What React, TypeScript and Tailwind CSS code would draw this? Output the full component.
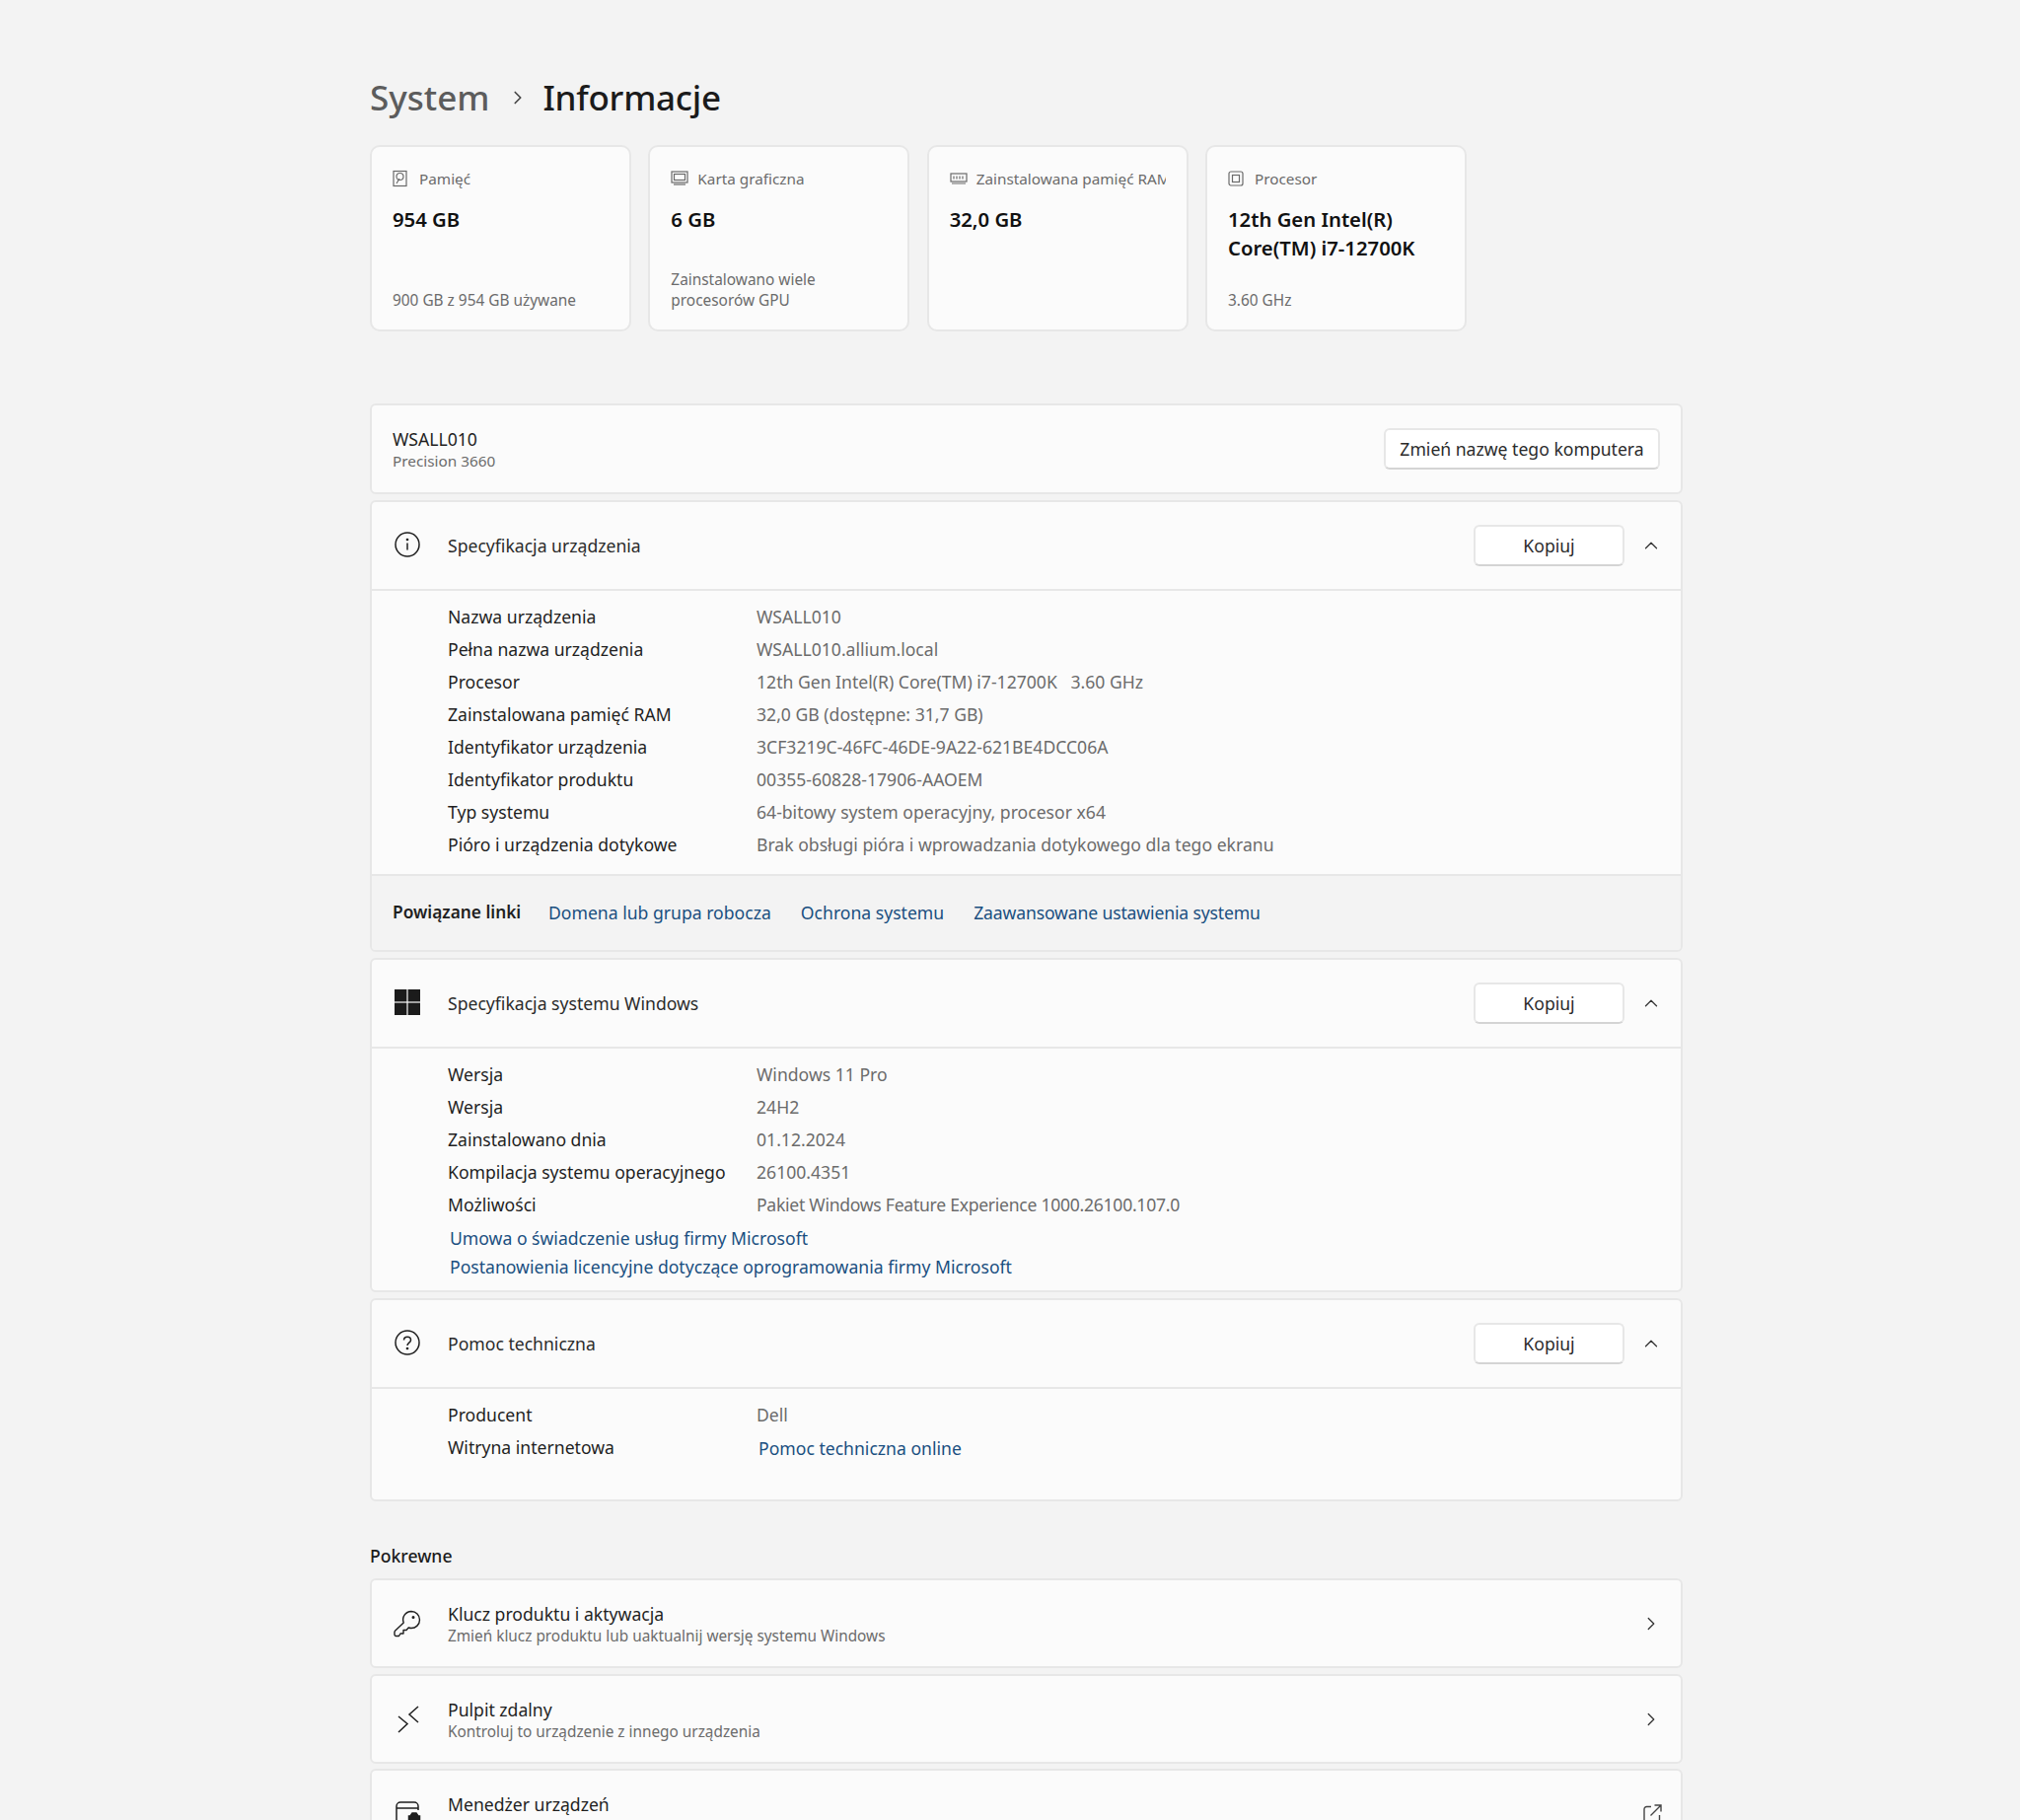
import React from 'react';
import { ChevronRight, ChevronUp } from 'lucide-react';

const font = "font-['Noto_Sans','Open_Sans',sans-serif]";

const deviceRows = [
  ['Nazwa urządzenia', 'WSALL010'],
  ['Pełna nazwa urządzenia', 'WSALL010.allium.local'],
  ['Procesor', '12th Gen Intel(R) Core(TM) i7-12700K   3.60 GHz'],
  ['Zainstalowana pamięć RAM', '32,0 GB (dostępne: 31,7 GB)'],
  ['Identyfikator urządzenia', '3CF3219C-46FC-46DE-9A22-621BE4DCC06A'],
  ['Identyfikator produktu', '00355-60828-17906-AAOEM'],
  ['Typ systemu', '64-bitowy system operacyjny, procesor x64'],
  ['Pióro i urządzenia dotykowe', 'Brak obsługi pióra i wprowadzania dotykowego dla tego ekranu'],
];

const windowsRows = [
  ['Wersja', 'Windows 11 Pro'],
  ['Wersja', '24H2'],
  ['Zainstalowano dnia', '01.12.2024'],
  ['Kompilacja systemu operacyjnego', '26100.4351'],
  ['Możliwości', 'Pakiet Windows Feature Experience 1000.26100.107.0', 'tracking-[-0.28px]'],
];

function DiskIcon() {
  return (
    <svg width="16" height="18" viewBox="0 0 16 18" fill="none" stroke="#6a6a6a" strokeWidth="1.2">
      <rect x="1" y="1.5" width="13" height="15" />
      <circle cx="7.5" cy="7" r="3.5" />
      <path d="M7 9l-3 5" />
    </svg>
  );
}

function GpuIcon() {
  return (
    <svg width="18" height="16" viewBox="0 0 18 16" fill="none" stroke="#6a6a6a" strokeWidth="1.2">
      <rect x="1" y="1" width="16" height="11" />
      <rect x="3.5" y="3.5" width="11" height="6" />
      <path d="M3 14h12" />
    </svg>
  );
}

function RamIcon() {
  return (
    <svg width="18" height="12" viewBox="0 0 18 12" fill="none" stroke="#6a6a6a" strokeWidth="1.2">
      <rect x="1" y="1" width="16" height="8" />
      <path d="M4 3.5v3M7 3.5v3M10 3.5v3M13 3.5v3M2 11h14" />
    </svg>
  );
}

function CpuIcon() {
  return (
    <svg width="16" height="16" viewBox="0 0 16 16" fill="none" stroke="#6a6a6a" strokeWidth="1.2">
      <rect x="1" y="1" width="14" height="14" rx="2" />
      <rect x="4.5" y="4.5" width="7" height="7" />
    </svg>
  );
}

function InfoIcon() {
  return (
    <svg width="26" height="26" viewBox="0 0 26 26" fill="none" stroke="#1f1f1f" strokeWidth="1.5">
      <circle cx="13" cy="13" r="12" />
      <path d="M13 11.5v7" />
      <circle cx="13" cy="8" r="0.6" fill="#1f1f1f" />
    </svg>
  );
}

function HelpIcon() {
  return (
    <svg width="26" height="26" viewBox="0 0 26 26" fill="none" stroke="#1f1f1f" strokeWidth="1.5">
      <circle cx="13" cy="13" r="12" />
      <path d="M9.5 10.5c0-2 1.5-3.3 3.5-3.3s3.5 1.3 3.5 3.2c0 2.8-3.5 2.7-3.5 5.6" />
      <circle cx="13" cy="19" r="0.6" fill="#1f1f1f" />
    </svg>
  );
}

function WindowsIcon() {
  return (
    <svg width="26" height="26" viewBox="0 0 26 26" fill="#1b1b1b">
      <rect x="0" y="0" width="12.4" height="12.4" />
      <rect x="13.6" y="0" width="12.4" height="12.4" />
      <rect x="0" y="13.6" width="12.4" height="12.4" />
      <rect x="13.6" y="13.6" width="12.4" height="12.4" />
    </svg>
  );
}

function KeyIcon() {
  return (
    <svg width="28" height="28" viewBox="0 0 28 28" fill="none" stroke="#1f1f1f" strokeWidth="1.4" strokeLinejoin="round">
      <path d="M18 1.5a8.5 8.5 0 0 1 8.5 8.5c0 5-4 8.5-8.5 8.5-1 0-2-.2-2.8-.5L13 20.5h-3V24H7l-1.5 2.5H2.5a1.5 1.5 0 0 1-1.5-1.5v-2.5c0-.5.2-.8.5-1.2l8.7-8.3A8.5 8.5 0 0 1 18 1.5z" />
      <circle cx="20" cy="7.5" r="0.8" fill="#1f1f1f" />
    </svg>
  );
}

function RemoteIcon() {
  return (
    <svg width="22" height="28" viewBox="0 0 22 28" fill="none" stroke="#1f1f1f" strokeWidth="1.5" className="ml-[4px]">
      <path d="M1 11l9 7.5L1 27" />
      <path d="M21 1l-9 8 9 8" />
    </svg>
  );
}

function DeviceIcon() {
  return (
    <svg width="26" height="26" viewBox="0 0 26 26" fill="none" stroke="#1f1f1f" strokeWidth="1.5" className="ml-[2px]">
      <path d="M1 25V5a4 4 0 0 1 4-4h14a4 4 0 0 1 4 4v4" />
      <path d="M1 7h22" />
      <path d="M15 15l2-3h4l2 3h1.5v8h-11v-8z" fill="#1f1f1f" />
    </svg>
  );
}

function ExternalIcon() {
  return (
    <svg width="19" height="19" viewBox="0 0 19 19" fill="none" stroke="#444" strokeWidth="1.4">
      <path d="M8 2.5H3.5a2.5 2.5 0 0 0-2.5 2.5v10.5A2.5 2.5 0 0 0 3.500 18h10.500a2.500 2.500 0 0 0 2.500-2.500V11" />
      <path d="M7.5 11.5L18 1M11.5 1H18v6.5" />
    </svg>
  );
}

function StatCard({ icon, label, value, sub }: { icon: React.ReactNode; label: string; value: string; sub?: string }) {
  return (
    <div className="w-[265px] h-[189px] flex-shrink-0 bg-[#fbfbfb] border-2 border-[#e7e7e7] rounded-[10px] px-[21px] flex flex-col relative">
      <div className="flex items-center h-[22px] mt-[21px] overflow-hidden">
        <div className="w-[27px] flex-shrink-0">{icon}</div>
        <span className="text-[15.3px] text-[#6b6b6b] whitespace-nowrap">{label}</span>
      </div>
      <div className="mt-[16px] text-[20.3px] leading-[29px] font-semibold text-[#111] whitespace-pre-line">{value}</div>
      {sub && (
        <div className="absolute left-[21px] bottom-[19.5px] text-[15.4px] leading-[21px] text-[#6b6b6b] whitespace-pre-line">{sub}</div>
      )}
    </div>
  );
}

function CardHeader({ icon, title }: { icon: React.ReactNode; title: string }) {
  return (
    <div className="h-[90px] flex items-center pl-[23px] pr-[21px] border-b-2 border-[#e7e7e7]">
      <div className="w-[54px] -mt-[2px] flex-shrink-0">{icon}</div>
      <span className="text-[17.6px] text-[#2b2b2b] flex-1">{title}</span>
      <button className="w-[153px] h-[42px] bg-white border-2 border-[#e7e7e7] border-b-[#d4d4d4] rounded-[6px] text-[17.6px] text-[#2b2b2b]">Kopiuj</button>
      <div className="w-[38px] flex justify-end -mr-[2px]">
        <ChevronUp size={22} strokeWidth={1.4} className="text-[#333]" />
      </div>
    </div>
  );
}

function Row({ label, value, cls }: { label: string; value: string; cls?: string }) {
  return (
    <div className="grid grid-cols-[313px_1fr] h-[33px] items-center text-[17.6px] whitespace-pre">
      <span className="text-[#1f1f1f]">{label}</span>
      <span className={`text-[#6b6b6b] ${cls ?? ''}`}>{value}</span>
    </div>
  );
}

function LinkCard({ icon, title, sub, right, className }: { icon: React.ReactNode; title: string; sub: string; right: React.ReactNode; className?: string }) {
  return (
    <div className={`h-[91px] flex-shrink-0 bg-[#fbfbfb] border-2 border-[#e7e7e7] rounded-[6px] flex items-center pl-[22px] pr-[19px] ${className ?? ''}`}>
      <div className="w-[55px] flex-shrink-0">{icon}</div>
      <div className="flex-1">
        <div className="text-[17.6px] leading-[24px] text-[#1f1f1f]">{title}</div>
        <div className="text-[15.35px] leading-[20px] text-[#6b6b6b]">{sub}</div>
      </div>
      {right}
    </div>
  );
}

export default function App() {
  return (
    <div className={`h-[1845px] overflow-hidden bg-[#f3f3f3] pl-[375px] pt-[75px] ${font}`}>
      <div className="w-[1331px]">
        <div className="h-[50px] flex items-center text-[35px] font-medium -mt-[1px] mb-[1px]">
          <span className="text-[#5c5c5c]">System</span>
          <ChevronRight size={22} strokeWidth={1.8} className="ml-[18px] mr-[14px] text-[#444]" />
          <span className="text-[#1b1b1b] tracking-[-0.25px]">Informacje</span>
        </div>

        <div className="mt-[23px] flex gap-[17.33px]">
          <StatCard icon={<DiskIcon />} label="Pamięć" value="954 GB" sub="900 GB z 954 GB używane" />
          <StatCard icon={<GpuIcon />} label="Karta graficzna" value="6 GB" sub={'Zainstalowano wiele\nprocesorów GPU'} />
          <StatCard icon={<RamIcon />} label="Zainstalowana pamięć RAM" value="32,0 GB" />
          <StatCard icon={<CpuIcon />} label="Procesor" value={'12th Gen Intel(R)\nCore(TM) i7-12700K'} sub="3.60 GHz" />
        </div>

        <div className="mt-[73px] h-[92px] bg-[#fbfbfb] border-2 border-[#e7e7e7] rounded-[6px] flex items-center justify-between pl-[21px] pr-[21px]">
          <div>
            <div className="text-[17.6px] leading-[23px] text-[#1f1f1f]">WSALL010</div>
            <div className="text-[15.3px] leading-[20px] text-[#6b6b6b]">Precision 3660</div>
          </div>
          <button className="w-[280px] h-[42px] bg-white border-2 border-[#e7e7e7] border-b-[#d4d4d4] rounded-[6px] text-[17.6px] text-[#2b2b2b]">Zmień nazwę tego komputera</button>
        </div>

        <div className="mt-[6px] h-[458px] bg-[#fbfbfb] border-2 border-[#e7e7e7] rounded-[6px] overflow-hidden flex flex-col">
          <CardHeader icon={<InfoIcon />} title="Specyfikacja urządzenia" />
          <div className="pl-[77px] pt-[10px] h-[288px]">
            {deviceRows.map(([l, v]) => <Row key={l} label={l} value={v} />)}
          </div>
          <div className="flex-1 bg-[#f3f3f3] border-t-2 border-[#e7e7e7] flex items-center pl-[21px] text-[17.6px] -mt-[1px]">
            <span className="font-semibold text-[17.3px] text-[#1f1f1f] w-[130px] whitespace-nowrap -mt-[2px]">Powiązane linki</span>
            <div className="flex gap-[30px] ml-[28px] text-[#1a4f80]">
              <span>Domena lub grupa robocza</span>
              <span>Ochrona systemu</span>
              <span className="tracking-[-0.15px]">Zaawansowane ustawienia systemu</span>
            </div>
          </div>
        </div>

        <div className="mt-[6px] h-[339px] bg-[#fbfbfb] border-2 border-[#e7e7e7] rounded-[6px] overflow-hidden">
          <CardHeader icon={<WindowsIcon />} title="Specyfikacja systemu Windows" />
          <div className="pl-[77px] pt-[10px]">
            {windowsRows.map(([l, v, c], i) => <Row key={i} label={l} value={v} cls={c} />)}
            <div className="pl-[2px] mt-[3px] text-[17.6px] leading-[29px] text-[#1a4f80]">
              <div>Umowa o świadczenie usług firmy Microsoft</div>
              <div>Postanowienia licencyjne dotyczące oprogramowania firmy Microsoft</div>
            </div>
          </div>
        </div>

        <div className="mt-[6px] h-[206px] bg-[#fbfbfb] border-2 border-[#e7e7e7] rounded-[6px] overflow-hidden">
          <CardHeader icon={<HelpIcon />} title="Pomoc techniczna" />
          <div className="pl-[77px] pt-[10px]">
            <Row label="Producent" value="Dell" />
            <div className="grid grid-cols-[313px_1fr] h-[33px] items-center text-[17.6px]">
              <span className="text-[#1f1f1f]">Witryna internetowa</span>
              <span className="text-[#1a4f80] pl-[2px] mt-[2px]">Pomoc techniczna online</span>
            </div>
          </div>
        </div>

        <div className="mt-[42px] h-[26px] flex items-center text-[17.6px] font-medium text-[#1b1b1b]">Pokrewne</div>

        <div className="mt-[10px] flex flex-col gap-[6px]">
          <LinkCard icon={<KeyIcon />} title="Klucz produktu i aktywacja" sub="Zmień klucz produktu lub uaktualnij wersję systemu Windows" right={<ChevronRight size={22} strokeWidth={1.4} className="text-[#333]" />} />
          <LinkCard icon={<RemoteIcon />} title="Pulpit zdalny" sub="Kontroluj to urządzenie z innego urządzenia" right={<ChevronRight size={22} strokeWidth={1.4} className="text-[#333]" />} />
          <LinkCard className="-mt-[1px]" icon={<DeviceIcon />} title="Menedżer urządzeń" sub="Drukarka i inne sterowniki, właściwości sprzętu" right={<ExternalIcon />} />
        </div>
      </div>
    </div>
  );
}
